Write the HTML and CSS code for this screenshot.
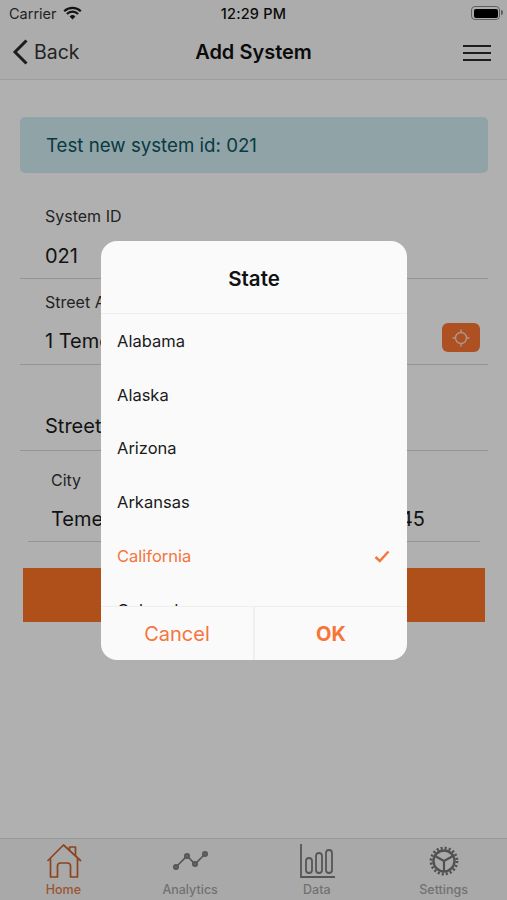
FILE: index.html
```html
<!DOCTYPE html>
<html lang="en">
<head>
<meta charset="utf-8">
<title>Add System</title>
<link rel="stylesheet" href="styles.css">
</head>
<body>
<div class="app">
  <header class="top">
    <div class="status">
      <div class="status-left">
        <span>Carrier</span>
        <svg class="wifi" width="19" height="14" viewBox="0 0 19 14"><path d="M9.5 13.6 6.6 10.4a4.2 4.2 0 0 1 5.8 0Z" fill="#1c1c1c"/><path d="M1.2 5.2a12 12 0 0 1 16.6 0M3.9 8a8 8 0 0 1 11.2 0" fill="none" stroke="#1c1c1c" stroke-width="2.2"/></svg>
      </div>
      <div class="clock">12:29 PM</div>
      <div class="battery"><span class="battery-fill"></span><span class="battery-tip"></span></div>
    </div>
    <nav class="navbar">
      <div class="back">
        <svg width="17" height="26" viewBox="0 0 17 26"><path d="M14.5 1.500 3 13l11.500 11.500" fill="none" stroke="#2a2a2a" stroke-width="3"/></svg>
        <span>Back</span>
      </div>
      <h1 class="nav-title">Add System</h1>
      <div class="burger"><i></i><i></i><i></i></div>
    </nav>
  </header>

  <main class="content">
    <div class="alert">Test new system id: 021</div>
    <div class="field field-first">
      <label class="field-label">System ID</label>
      <div class="field-value">021</div>
    </div>
    <div class="field field-street">
      <label class="field-label">Street Address</label>
      <div class="field-value">1 Temecula Pkwy</div>
      <button class="locate" type="button">
        <svg width="20" height="20" viewBox="0 0 20 20" fill="none" stroke="#f6d9c8" stroke-width="1.400"><circle cx="10" cy="10" r="5.500"/><path d="M10 1.500V5M10 15v3.500M1.500 10H5M15 10h3.500"/></svg>
      </button>
    </div>
    <div class="field field-plain">
      <div class="field-value">Street Address 2</div>
    </div>
    <div class="city-row">
      <div class="city-col">
        <label class="field-label">City</label>
        <div class="field-value">Temecula</div>
      </div>
      <div class="zip-col">
        <label class="field-label">Zip</label>
        <div class="field-value">92545</div>
      </div>
    </div>
    <button class="primary" type="button">Save</button>
  </main>

  <footer class="tabs">
    <div class="tab tab-active">
      <svg class="tab-icon" width="36" height="35" viewBox="0 0 36 35" fill="none" stroke="#c9622b" stroke-width="1.700" stroke-linejoin="round"><path d="M2.500 17 18.500 1 36 17"/><path d="M24.500 6V3h6v9"/><path d="M5.500 14.500V33h7V22a3 3 0 0 1 3-3h7a3 3 0 0 1 3 3v11h7V14.500"/></svg>
      <span>Home</span>
    </div>
    <div class="tab">
      <svg class="tab-icon" width="36" height="35" viewBox="0 0 36 35" fill="none" stroke="#7a7a7a" stroke-width="1.600"><path d="M4 23 15 12l8 8 10-10"/><g fill="#909090"><circle cx="4" cy="23" r="2.200"/><circle cx="15" cy="12" r="2.200"/><circle cx="23" cy="20" r="2.200"/><circle cx="33" cy="10" r="2.200"/></g></svg>
      <span>Analytics</span>
    </div>
    <div class="tab">
      <svg class="tab-icon" width="36" height="35" viewBox="0 0 36 35" fill="none" stroke="#7c7c7c" stroke-width="1.800"><path d="M2 0v33h34"/><rect x="7" y="14" width="6" height="15" rx="3"/><rect x="17" y="9" width="6" height="20" rx="3"/><rect x="27" y="6" width="6" height="23" rx="3"/></svg>
      <span>Data</span>
    </div>
    <div class="tab">
      <svg class="tab-icon" width="36" height="35" viewBox="0 0 36 35" fill="none" stroke="#747474"><circle cx="18" cy="17" r="10.500" stroke-width="2.400"/><circle cx="18" cy="17" r="13" stroke-width="2.800" stroke-dasharray="2.100 2"/><path d="M18 17 9 12M18 17 27 12M18 17V27" stroke-width="2.200"/></svg>
      <span>Settings</span>
    </div>
  </footer>

  <div class="scrim">
    <section class="dialog">
      <h2 class="dialog-title">State</h2>
      <ul class="state-list">
        <li>Alabama</li>
        <li>Alaska</li>
        <li>Arizona</li>
        <li>Arkansas</li>
        <li class="selected">California
          <svg width="16" height="13" viewBox="0 0 16 13"><path d="M1.500 7 5.800 11 14.500 1.500" fill="none" stroke="#f7743a" stroke-width="2.400"/></svg>
        </li>
        <li>Colorado</li>
      </ul>
      <div class="dialog-actions">
        <button class="dialog-btn" type="button">Cancel</button>
        <button class="dialog-btn dialog-ok" type="button">OK</button>
      </div>
    </section>
  </div>
</div>
</body>
</html>
```
FILE: styles.css
```css
* { box-sizing: border-box; }
html, body { margin: 0; padding: 0; }
body {
  font-family: Inter, "Liberation Sans", sans-serif;
  color: #111;
  background: #fdfdfd;
}
.app {
  position: relative;
  width: 507px;
  height: 900px;
  overflow: hidden;
  display: flex;
  flex-direction: column;
}
.top {
  height: 80px;
  background: #f7f7f7;
  border-bottom: 1px solid #e2e2e2;
  flex: none;
}
.status {
  height: 26px;
  padding: 0 7px 0 9px;
  display: flex;
  align-items: center;
  justify-content: space-between;
  font-size: 14.500px;
  position: relative;
}
.status-left { display: flex; align-items: center; gap: 6px; color: #333; }
.clock {
  position: absolute;
  left: 0;
  right: 0;
  text-align: center;
  font-weight: 500;
  letter-spacing: .2px;
}
.battery {
  width: 29px;
  height: 14px;
  border: 1.500px solid #8a8a8a;
  border-radius: 4px;
  padding: 1.500px;
  position: relative;
}
.battery-fill { display: block; height: 100%; width: 100%; background: #000; border-radius: 2px; }
.battery-tip {
  position: absolute;
  right: -4px;
  top: 3px;
  width: 2px;
  height: 5px;
  background: #8a8a8a;
  border-radius: 0 2px 2px 0;
}
.navbar {
  height: 52px;
  padding: 0 16px 0 12px;
  display: flex;
  align-items: center;
  justify-content: space-between;
  position: relative;
}
.back { display: flex; align-items: center; gap: 5px; font-size: 19.500px; color: #333; }
.nav-title {
  position: absolute;
  left: 0;
  right: 0;
  margin: 0;
  text-align: center;
  font-size: 20px;
  font-weight: 600;
  pointer-events: none;
}
.burger { width: 28px; margin-top: 2px; display: flex; flex-direction: column; gap: 4.500px; }
.burger i { display: block; height: 2.500px; background: #2a2a2a; }

.content { flex: 1; padding: 37px 19px 0 20px; }
.alert {
  height: 56px;
  background: #cfeaef;
  border-radius: 5px;
  padding: 0 26px;
  display: flex;
  align-items: center;
  color: #0c5460;
  font-size: 18.700px;
}
.field {
  position: relative;
  height: 86px;
  padding: 13px 25px 0;
  border-bottom: 1px solid #d4d4d4;
}
.field-first { height: 106px; padding-top: 33px; }
.field-label { display: block; font-size: 16px; line-height: 20px; color: #333; }
.field-value { font-size: 20px; line-height: 24px; margin-top: 17px; color: #1a1a1a; }
.field-first .field-value { margin-top: 18px; }
.field-plain { padding-top: 49px; }
.field-plain .field-value { margin-top: 0; }
.locate {
  position: absolute;
  right: 8px;
  top: 44px;
  width: 38px;
  height: 29px;
  padding: 0;
  border: 0;
  border-radius: 6px;
  background: #fa7531;
  display: flex;
  align-items: center;
  justify-content: center;
}
.city-row {
  margin: 0 8px;
  height: 91px;
  padding: 19px 55px 0 23px;
  display: flex;
  justify-content: space-between;
  border-bottom: 1px solid #d4d4d4;
}
.primary {
  display: block;
  width: 462px;
  height: 54px;
  margin: 26px 0 0 3px;
  border: 0;
  background: #fb7226;
  color: #fff;
  font: 600 20px Inter, sans-serif;
}

.tabs {
  flex: none;
  height: 62px;
  display: grid;
  grid-template-columns: repeat(4, 1fr);
  background: #f3f3f3;
  border-top: 1px solid #dcdcdc;
  padding-top: 5px;
}
.tab {
  display: flex;
  flex-direction: column;
  align-items: center;
  font-size: 12.500px;
  font-weight: 500;
  color: #a3a3a3;
}
.tab-icon { overflow: visible; }
.tab span { line-height: 15px; margin-top: 3px; }
.tab-active { color: #e07a45; }

.scrim {
  position: absolute;
  inset: 0;
  background: rgba(0, 0, 0, .3);
  display: block;
}
.dialog {
  position: absolute;
  left: 101px;
  top: 241px;
  width: 306px;
  height: 419px;
  background: #fafafa;
  border-radius: 16px;
  overflow: hidden;
  display: flex;
  flex-direction: column;
}
.dialog-title {
  margin: 0;
  flex: none;
  height: 73px;
  padding-top: 2px;
  display: flex;
  align-items: center;
  justify-content: center;
  font-size: 20.500px;
  font-weight: 600;
  color: #111;
  border-bottom: 1px solid #efefef;
}
.state-list {
  list-style: none;
  margin: 0;
  padding: 0;
  flex: 1;
  overflow: hidden;
}
.state-list li {
  height: 53.800px;
  padding: 0 17px 0 16px;
  display: flex;
  align-items: center;
  justify-content: space-between;
  font-size: 16.500px;
  color: #1a1a1a;
}
.state-list .selected { color: #f7743a; }
.dialog-actions {
  flex: none;
  height: 54px;
  display: grid;
  grid-template-columns: 152px 1fr;
  border-top: 1px solid #efefef;
}
.dialog-btn {
  border: 0;
  background: transparent;
  color: #f7743a;
  font: 400 20px Inter, sans-serif;
  padding: 0;
}
.dialog-ok { font-weight: 700; border-left: 2px solid #efefef; }
```
